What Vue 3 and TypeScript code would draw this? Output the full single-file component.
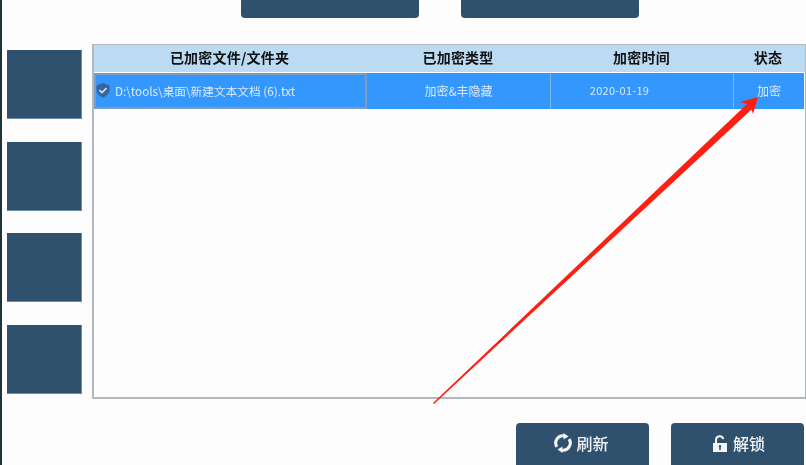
<script setup lang="ts">
const sideItems = [1, 2, 3, 4]

const columns = ['已加密文件/文件夹', '已加密类型', '加密时间', '状态']
</script>

<template>
  <div class="page">
    <div class="top-bar">
      <div class="top-btn"></div>
      <div class="top-btn"></div>
    </div>

    <div class="main">
      <div class="side">
        <div v-for="item in sideItems" :key="item" class="side-btn"></div>
      </div>

      <div class="table">
        <div class="table-row table-head">
          <div v-for="col in columns" :key="col" class="head-cell">{{ col }}</div>
        </div>
        <div class="table-row table-item">
          <div class="cell cell-path">
            <svg class="shield" viewBox="0 0 14 15" width="14" height="15">
              <path d="M7 0 13.5 2.5V7C13.5 10.5 10.5 13 7 14.5 3.5 13 .5 10.5 .5 7V2.5Z" fill="#37659a" />
              <path d="M3.4 7.2 6 9.6 10.6 5" fill="none" stroke="#d3e2f0" stroke-width="1.7" />
            </svg>
            <span>D:\tools\桌面\新建文本文档 (6).txt</span>
          </div>
          <div class="cell">加密&amp;丰隐藏</div>
          <div class="cell cell-date">2020-01-19</div>
          <div class="cell">加密</div>
        </div>
      </div>
    </div>

    <div class="bottom-bar">
      <div class="action-btn action-refresh">
        <svg viewBox="0 0 20 20" width="20" height="20">
          <path d="M10.9 2.85A7.2 7.2 0 0 0 3.9 13.9M9.1 17.15A7.2 7.2 0 0 0 16.1 6.1" fill="none" stroke="#f4f6f8" stroke-width="3" />
          <path d="M10.5 0 15.5 3.4 10.5 6.4ZM9.5 20 4.5 16.6 9.5 13.6Z" fill="#f4f6f8" />
        </svg>
        <span>刷新</span>
      </div>
      <div class="action-btn action-unlock">
        <svg viewBox="0 0 14 17" width="14" height="17">
          <path d="M3 8V4.8A3.7 3.7 0 0 1 10.3 4" fill="none" stroke="#f4f6f8" stroke-width="2" />
          <path fill-rule="evenodd" d="M0 8H14V17H0ZM7 10A1.3 1.3 0 0 0 6.2 12.3V15H7.8V12.3A1.3 1.3 0 0 0 7 10Z" fill="#f4f6f8" />
        </svg>
        <span>解锁</span>
      </div>
    </div>

    <svg class="arrow" viewBox="0 0 806 465" width="806" height="465">
      <polygon points="433,403 747,104 740,102 758,97 753,114 751.5,109.5 434,404" fill="#fd2012" />
    </svg>
  </div>
</template>

<style>
html,
body {
  margin: 0;
  background: #fdfdfd;
}
</style>

<style scoped>
.page {
  position: relative;
  box-sizing: border-box;
  width: 806px;
  height: 465px;
  overflow: hidden;
  border-left: 2px solid #22303a;
  background: #fdfdfd;
  font-family: 'Noto Sans CJK SC', 'Liberation Sans', sans-serif;
}

.top-bar {
  display: flex;
  gap: 42px;
  height: 18px;
  padding-left: 239px;
}

.top-btn {
  width: 178px;
  height: 18px;
  border-radius: 0 0 4px 4px;
  background: #2f516e;
}

.main {
  display: flex;
  align-items: flex-start;
  height: 381px;
  margin-top: 26px;
  padding-left: 5px;
}

.side {
  display: flex;
  flex-direction: column;
  gap: 22.5px;
  width: 75px;
  margin-top: 6px;
  margin-right: 10px;
}

.side-btn {
  box-sizing: border-box;
  height: 69px;
  border-right: 1px solid #6f8aa3;
  border-bottom: 1px solid #6f8aa3;
  background: #2f516e;
}

.table {
  box-sizing: border-box;
  width: 714px;
  height: 355px;
  padding-right: 1px;
  border: 1px solid #b4b6c0;
  border-left-width: 2px;
  border-bottom-width: 2px;
  background: #fdfdfd;
}

.table-row {
  display: grid;
  grid-template-columns: 273px 184px 183px 70px;
}

.table-head {
  height: 27px;
  margin-right: -1px;
  padding-right: 1px;
  background: #bbdbf3;
}

.head-cell {
  display: flex;
  align-items: center;
  justify-content: center;
  padding-right: 2px;
  padding-bottom: 3px;
  font-size: 14px;
  font-weight: 700;
  letter-spacing: 0.2px;
  color: #111;
  filter: blur(0.3px);
}

.table-item {
  height: 36px;
  margin-top: 1px;
  background: #3497fe;
}

.cell {
  display: flex;
  align-items: center;
  justify-content: center;
  box-sizing: border-box;
  padding-bottom: 2px;
  border-right: 1px solid #7cb6ee;
  font-size: 12px;
  color: #d9ebff;
  filter: blur(0.3px);
}

.cell:last-child {
  border-right: none;
}

.cell-path {
  justify-content: flex-start;
  gap: 5px;
  padding-left: 0;
  border: 2px solid #7f9cba;
  font-size: 11.7px;
}

.cell-date {
  padding-right: 45px;
  font-size: 11px;
  letter-spacing: 0.3px;
}

.bottom-bar {
  display: flex;
  justify-content: flex-end;
  gap: 22px;
  margin-top: -2px;
  padding-right: 2px;
}

.action-btn {
  display: flex;
  align-items: center;
  justify-content: center;
  width: 133px;
  height: 42px;
  padding-bottom: 2px;
  box-sizing: border-box;
  border-radius: 4px 4px 0 0;
  background: #2f516e;
  font-size: 16px;
  font-weight: 500;
  color: #f2f4f6;
}

.action-refresh {
  gap: 3px;
  padding-right: 3px;
}

.action-unlock {
  gap: 6px;
  padding-left: 3px;
}

.action-btn span {
  filter: blur(0.3px);
}

.arrow {
  position: absolute;
  top: 0;
  left: -2px;
  pointer-events: none;
}
</style>
